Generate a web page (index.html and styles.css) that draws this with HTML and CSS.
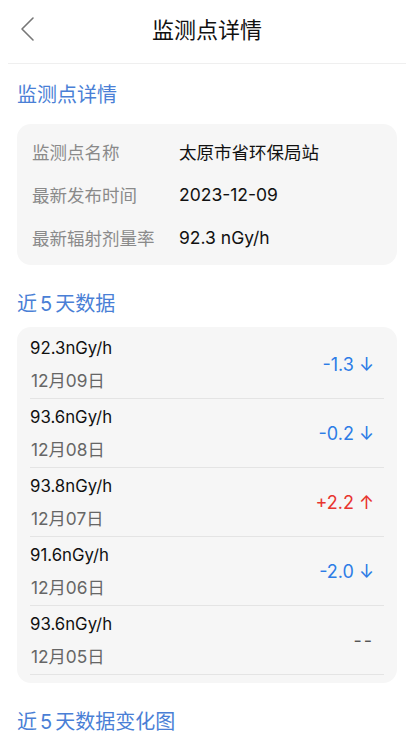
FILE: index.html
```html
<!DOCTYPE html>
<html lang="zh-CN">
<head>
    <meta charset="UTF-8">
    <meta name="viewport" content="width=device-width, initial-scale=1.0">
    <link rel="stylesheet" href="styles.css">
</head>
<body>
    <div class="nav">
        <span class="nav-back">
            <svg width="16" height="26" viewBox="0 0 16 26">
                <path d="M13 2 L2 13 L13 24" fill="none" stroke="#777" stroke-width="1.6" stroke-linecap="round" stroke-linejoin="round"/>
            </svg>
        </span>
        <h1 class="nav-title">监测点详情</h1>
    </div>
    <div class="page">
        <h2 class="section-title first">监测点详情</h2>
        <div class="card info-card">
            <div class="info-row">
                <span class="info-label">监测点名称</span>
                <span class="info-value">太原市省环保局站</span>
            </div>
            <div class="info-row">
                <span class="info-label">最新发布时间</span>
                <span class="info-value">2023-12-09</span>
            </div>
            <div class="info-row">
                <span class="info-label">最新辐射剂量率</span>
                <span class="info-value">92.3 nGy/h</span>
            </div>
        </div>

        <h2 class="section-title">近<span class="num">5</span>天数据</h2>
        <div class="card list-card" id="dayList"></div>

        <h2 class="section-title">近<span class="num">5</span>天数据变化图</h2>
    </div>
    <script>
        // last 5 days of readings
        const days = [
            { value: '92.3', date: '12月09日', diff: '-1.3', dir: 'down' },
            { value: '93.6', date: '12月08日', diff: '-0.2', dir: 'down' },
            { value: '93.8', date: '12月07日', diff: '+2.2', dir: 'up' },
            { value: '91.6', date: '12月06日', diff: '-2.0', dir: 'down' },
            { value: '93.6', date: '12月05日', diff: '--', dir: 'none' }
        ];

        const list = document.getElementById('dayList');

        days.forEach(day => {
            const row = document.createElement('div');
            row.className = 'day-row';

            const arrow = day.dir === 'down' ? ' ↓' : day.dir === 'up' ? ' ↑' : '';

            row.innerHTML =
                '<div class="day-left">' +
                    '<div class="day-value">' + day.value + 'nGy/h</div>' +
                    '<div class="day-date">' + day.date + '</div>' +
                '</div>' +
                '<div class="day-diff ' + day.dir + '">' + day.diff + arrow + '</div>';

            list.appendChild(row);
        });
    </script>
</body>
</html>
```

FILE: styles.css
```css
body {
    margin: 0;
    background-color: #fff;
    font-family: Inter, "Noto Sans CJK SC", sans-serif;
    color: #111;
}

.nav {
    height: 63px;
    display: flex;
    align-items: center;
    justify-content: center;
    position: relative;
    margin: 0 8px;
    border-bottom: 1px solid #efefef;
}
.nav-back {
    position: absolute;
    left: 12px;
    top: 16px;
}
.nav-title {
    margin: 0 0 7px;
    font-size: 22px;
    font-weight: 400;
    color: #111;
}

.page {
    padding: 0 17px;
}

.section-title {
    margin: 27px 0 11px;
    line-height: 24px;
    font-size: 20px;
    font-weight: 400;
    color: #4a7fd6;
}
.section-title.first {
    margin: 19px 0 17px;
}
.section-title .num {
    margin: 0 3px;
}

.card {
    background-color: #f6f6f6;
    border-radius: 14px;
}

.info-card {
    padding: 6px 15px;
}
.info-row {
    display: flex;
    height: 43px;
    align-items: center;
    font-size: 17.5px;
}
.info-label {
    width: 147px;
    color: #8a8a8a;
}
.info-value {
    color: #111;
}

.list-card {
    padding: 3px 13px 8px;
}
.day-row {
    display: flex;
    align-items: center;
    justify-content: space-between;
    height: 68px;
    border-bottom: 1px solid #e4e4e4;
}
.day-left {
    display: flex;
    flex-direction: column;
    gap: 9px;
    padding-top: 1px;
}
.day-value {
    line-height: 24px;
    font-size: 16.8px;
    color: #111;
}
.day-date {
    line-height: 24px;
    font-size: 17.3px;
    color: #666;
    padding-left: 1px;
}
.day-diff {
    font-size: 18px;
    margin-right: 10px;
    margin-top: 1px;
}
.day-diff.down {
    color: #2d7ce6;
}
.day-diff.up {
    color: #e8352f;
}
.day-diff.none {
    color: #555;
    letter-spacing: 2px;
}
```
